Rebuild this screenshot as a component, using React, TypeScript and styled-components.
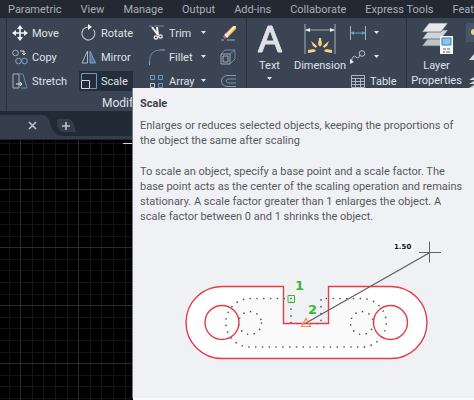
import React from 'react';
import styled, { createGlobalStyle } from 'styled-components';

const GlobalStyle = createGlobalStyle`
  * { box-sizing: border-box; }
  body { margin: 0; background: #000; overflow: hidden; }
  body, button { font-family: Roboto, "Open Sans", sans-serif; }
  button { appearance: none; border: 0; padding: 0; margin: 0; background: none; color: inherit; }
  svg { display: block; flex: none; overflow: visible; }
`;

const Workspace = styled.div`
  position: relative;
  display: flex;
  flex-direction: column;
  min-height: 100vh;
  overflow: hidden;
`;

const TabBar = styled.nav`
  display: flex;
  gap: 19px;
  height: 18px;
  padding-left: 8px;
  background: #222933;
  overflow: hidden;
`;

const RibbonTab = styled.button`
  flex: none;
  font-size: 11px;
  line-height: 19px;
  color: #a9afb8;
  white-space: nowrap;
`;

const Ribbon = styled.div`
  display: flex;
  height: 93px;
  padding-left: 6px;
  background: #3b4453;
  color: #dfe3e9;
  overflow: hidden;
`;

const Panel = styled.section<{ $width: number }>`
  flex: none;
  width: ${p => p.$width}px;
  border-left: 1px solid #29313d;
`;

const ToolGrid = styled.div`
  display: grid;
  grid-template-columns: 69px 68px 71px 24px;
  grid-auto-rows: 24px;
  padding: 3px 0 0 3px;
`;

const Tool = styled.button<{ $active?: boolean; $menu?: boolean }>`
  display: flex;
  align-items: center;
  gap: 4px;
  width: ${p => (p.$active ? '54px' : p.$menu ? '60px' : 'auto')};
  height: ${p => (p.$active ? '20px' : '24px')};
  align-self: center;
  padding-left: 2px;
  background: ${p => (p.$active ? '#242d3a' : 'transparent')};
  font-size: 11px;
  white-space: nowrap;
`;

const ToolLabel = styled.span`
  flex: 1;
  text-align: left;
`;

const PanelTitle = styled.div`
  padding-left: 95px;
  font-size: 12px;
  line-height: 20px;
`;

const AnnotationPanel = styled(Panel)`
  display: flex;
`;

const BigTool = styled.button<{ $width: number }>`
  display: flex;
  flex-direction: column;
  align-items: center;
  flex: none;
  width: ${p => p.$width}px;
  height: 70px;
  padding-top: 5px;
  font-size: 11px;
  line-height: 15px;
`;

const AnnotationTools = styled.div`
  display: flex;
  gap: 2px;
  width: 101px;
`;

const BigLabel = styled.span`
  display: block;
  padding-top: 1px;
`;

const SmallTools = styled.div`
  display: grid;
  grid-auto-rows: 24px;
  padding-top: 3px;
`;

const LayerPanel = styled(Panel)`
  display: flex;
`;

const LayerTools = styled.div`
  display: flex;
  flex-direction: column;
  gap: 6px;
  padding-top: 5px;
`;

const LayerButton = styled.button<{ $active?: boolean }>`
  display: flex;
  align-items: center;
  width: 40px;
  height: 19px;
  padding-left: 3px;
  background: ${p => (p.$active ? '#46546c' : 'transparent')};
`;

const FileTabs = styled.div`
  display: flex;
  height: 28px;
  background: #222a36;
`;

const FileTab = styled.div`
  display: flex;
  position: relative;
`;

const TabShape = styled.svg`
  width: 133px;
  height: 28px;
`;

const CloseButton = styled.button`
  position: absolute;
  left: 27px;
  top: 9px;
  width: 11px;
  height: 11px;
`;

const NewTab = styled.button`
  position: absolute;
  left: 57px;
  top: 7px;
  width: 20px;
  height: 16px;
`;

const Drawing = styled.svg`
  flex: 1 0 auto;
  width: 100%;
  height: 261px;
  background: #000;
`;

const Tooltip = styled.aside`
  position: absolute;
  left: 133px;
  top: 88px;
  right: 0;
  bottom: 2px;
  padding: 8px 2px 0 7px;
  background: #f0f1f5;
  color: #58595d;
  box-shadow: 0 2px 0 #fafbfd, -1px 0 0 #777a7e;
`;

const TipTitle = styled.h1`
  margin: 0 0 7px;
  font-size: 11px;
  line-height: 15px;
  font-weight: 700;
  color: #414246;
`;

const TipText = styled.p`
  margin: 0 0 16px;
  font-size: 11px;
  line-height: 15px;
  white-space: nowrap;
`;

const Diagram = styled.svg`
  position: absolute;
  left: 47px;
  top: 147px;
`;

const Arrow = () => (
  <svg width="6" height="4" viewBox="0 0 6 4"><path d="M0 0h5L2.500 3z" fill="#e4e7ec" /></svg>
);

const paths: Record<string, React.ReactNode> = {
  move: <g fill="#f1f3f5" stroke="#f1f3f5"><path d="M8 3v10M3 8h10" strokeWidth="1.600" /><path stroke="none" d="M8 0l3 4H5zM8 16l-3-4h6zM0 8l4-3v6zM16 8l-4 3V5z" /></g>,
  copy: <g fill="none" stroke="#a9b4c1"><circle cx="3.500" cy="4" r="2.800" /><path d="M8 2h4v4M10 4l2 2 2-2" stroke="#e4e7ec" /><circle cx="6.500" cy="12" r="2.800" stroke="#7ba7c9" /><circle cx="12.500" cy="12" r="2.800" stroke="#7ba7c9" /></g>,
  stretch: <g fill="none"><path d="M1 1h6v14H1z" stroke="#aab2bd" /><path d="M7 1h4l4 14H9" stroke="#638caf" /><path d="M4 11h6M8 9l2 2-2 2" stroke="#e7eaf0" /></g>,
  rotate: <g fill="none" stroke="#b5bfca" strokeWidth="1.200"><path d="M12.500 4.500A6.500 6.500 0 1 1 7 2" /><path d="M7 -1l4 3-4 3z" fill="#f0f2f5" stroke="none" /></g>,
  mirror: <g><path d="M6.500 2v12H1z" fill="none" stroke="#aab5c1" /><path d="M9 2v12h5.500z" fill="#51799b" stroke="#79a3c5" /></g>,
  scale: <g fill="none"><path d="M.5 7V.5h15v15H9" stroke="#6f9bbb" /><path d="M.5 7.500h8v8h-8z" stroke="#d3d9e0" /></g>,
  trim: <g fill="none" stroke="#f0f1f4"><path d="M0 1h3M5 1h10" stroke="#7c8898" /><path d="M3 2l6 8M8 2l1 8" strokeWidth="2" /><circle cx="7" cy="12.500" r="1.700" strokeWidth="1.300" /><circle cx="11.500" cy="11.500" r="1.700" strokeWidth="1.300" /></g>,
  fillet: <g fill="none"><path d="M.5 16v-4M11 1h5" stroke="#98a4b2" /><path d="M.5 12Q1 1 11 1" stroke="#638eaf" /></g>,
  array: <g fill="none" stroke="#6e9dbf"><path d="M1.500 2.500h4v4h-4zM9.500 2.500h4v4h-4zM9.500 10.500h4v4h-4z" /><path d="M1.500 10.500h4v4h-4z" stroke="#c8ced5" /></g>,
  erase: <g><path d="M1 15h3M7 15h8" stroke="#a5abb4" /><path d="M13 1h3v3l-7 7-3-3z" fill="#f4bd5d" /><path d="M14 1l2 .5L8 10l-1-1z" fill="#fff0cc" /><path d="M6 8l3 3-2 2-3-3z" fill="#f5f5f5" /><path d="M4 10l3 3-2 1-2-2z" fill="#d9576a" /></g>,
  explode: <g fill="none"><path d="M1 5h9v10H1zM3 7h5v6H3z" stroke="#9da9b5" /><path d="M1 5l4-4h10v9l-5 5M10 5l5-4" stroke="#638eae" /></g>,
  offset: <g fill="none"><path d="M16 2.500H7a5 5 0 0 0 0 11h9" stroke="#899dad" /><path d="M16 6H8q-4 2 0 4h8" stroke="#679abc" /></g>,
};

const Icon = ({ name }: { name: string }) => <svg width="16" height="16" viewBox="0 0 16 16">{paths[name]}</svg>;

const tools: { icon: string; label?: string; menu?: boolean }[] = [
  { icon: 'move', label: 'Move' }, { icon: 'rotate', label: 'Rotate' }, { icon: 'trim', label: 'Trim', menu: true }, { icon: 'erase' },
  { icon: 'copy', label: 'Copy' }, { icon: 'mirror', label: 'Mirror' }, { icon: 'fillet', label: 'Fillet', menu: true }, { icon: 'explode' },
  { icon: 'stretch', label: 'Stretch' }, { icon: 'scale', label: 'Scale' }, { icon: 'array', label: 'Array', menu: true }, { icon: 'offset' },
];

const tabs = ['Parametric', 'View', 'Manage', 'Output', 'Add-ins', 'Collaborate', 'Express Tools', 'Featured Apps'];

const DimensionIcon = () => (
  <svg width="32" height="34" viewBox="0 0 32 34">
    <path d="M1 1v30M31 1v30M2 7h28" stroke="#a5b0bc" fill="none" />
    <path d="M1 7l5-2v4zM31 7l-5-2v4z" fill="#e6eaf0" />
    <g fill="#f4d187"><path d="M15 15h2l1 6-2 3-2-3zM7 18l6 5-1 2-3-2zM25 18l-6 5 1 2 3-2zM4 27l6-1 2 2-2 1-6 1zM28 27l-6-1-2 2 2 1 6 1z" /></g>
  </svg>
);

const LayersIcon = () => (
  <svg width="32" height="34" viewBox="0 0 32 34">
    <g stroke="#4f5968" strokeWidth=".7"><path d="M8 14h19l-7 9H1z" fill="#bfc3c8" /><path d="M8 7h19l-7 9H1z" fill="#d1d4d7" /><path d="M8 0h19l-7 9H1z" fill="#e7e8e9" /></g>
    <path d="M19 13h13v18H19z" fill="#f7f8fa" />
    <path d="M21 15h9v7h-9z" fill="#8bc6e9" stroke="#3185b7" />
    <path d="M22 26h3m1 0h3M22 29h2m1 0h4" stroke="#57616d" />
  </svg>
);

const GridDrawing = () => (
  <Drawing role="img" aria-label="Drawing area">
    <defs>
      <pattern id="grid" x="20" y="50" width="58" height="58" patternUnits="userSpaceOnUse">
        <path d="M12.500 0v58M23.500 0v58M35.500 0v58M47.500 0v58M0 12.500h58M0 23.500h58M0 35.500h58M0 47.500h58" stroke="#131515" />
        <path d="M.5 0v58M0 .5h58" stroke="#292b2b" />
      </pattern>
    </defs>
    <rect width="100%" height="100%" fill="url(#grid)" />
    <path d="M123 4.500h10" stroke="#d6d6d6" />
    <path d="M0 .5h133" stroke="#202733" />
  </Drawing>
);

const ScaleDiagram = () => (
  <Diagram width="270" height="140" viewBox="180 235 270 140" role="img" aria-label="Scaling from base point 1 to point 2 by 1.50">
    <path d="M222 286.500H283.500V323.500H328.500V286.500H391A36 36 0 0 1 391 358.500H222A36 36 0 0 1 222 286.500Z" fill="#fff" />
    <path d="M250 298.500h33.500v25h45v-25H362a24 24 0 0 1 0 48.500H250a24 24 0 0 1 0-48.500z" fill="#fafafb" />
    <circle cx="222" cy="322.500" r="17" fill="#fdfdfe" /><circle cx="390.500" cy="322.500" r="17" fill="#fdfdfe" />
    <g fill="none" stroke="#555" strokeWidth="1.700" strokeLinecap="round" strokeDasharray="0 6.800">
      <path d="M291 298.500H250a24 24 0 0 0 0 48.500H362a24 24 0 0 0 0-48.500H321V323.500H291Z" />
      <circle cx="250" cy="323" r="11.500" /><circle cx="362" cy="323" r="11.500" />
    </g>
    <g fill="none" stroke="#e43d47" strokeWidth="1.400">
      <path d="M222 286.500H283.500V323.500H328.500V286.500H391A36 36 0 0 1 391 358.500H222A36 36 0 0 1 222 286.500Z" />
      <circle cx="222" cy="322.500" r="17" /><circle cx="390.500" cy="322.500" r="17" />
    </g>
    <path d="M306 323L430 252.500" stroke="#626265" strokeWidth="1.400" />
    <path d="M419 252.500h22M429.500 241.500v21" stroke="#626265" />
    <path d="M301.500 326.500l4.500-8 4.500 8z" fill="none" stroke="#f28d4c" strokeWidth="1.200" />
    <path d="M288 295.500h6.500v7H288z" fill="none" stroke="#35ba2c" />
    <path d="M394 241h20v10h-20z" fill="#f7f8fa" />
    <g fontFamily="DejaVu Sans, sans-serif" fontWeight="700">
      <text x="295" y="290" fontSize="13" fill="#35ba2c">1</text>
      <text x="308" y="314" fontSize="13" fill="#35ba2c">2</text>
      <text x="394" y="249" fontSize="7" fill="#151515">1.50</text>
    </g>
  </Diagram>
);

export default function App() {
  return (
    <Workspace>
      <GlobalStyle />
      <TabBar>{tabs.map(t => <RibbonTab key={t}>{t}</RibbonTab>)}</TabBar>
      <Ribbon>
        <Panel $width={240}>
          <ToolGrid>
            {tools.map(t => (
              <Tool key={t.icon} $active={t.icon === 'scale'} $menu={t.menu} aria-label={t.label ?? t.icon}>
                <Icon name={t.icon} />
                {t.label && <ToolLabel>{t.label}</ToolLabel>}
                {t.menu && <Arrow />}
              </Tool>
            ))}
          </ToolGrid>
          <PanelTitle>Modify</PanelTitle>
        </Panel>
        <AnnotationPanel $width={160}>
          <AnnotationTools>
            <BigTool $width={45}>
              <svg width="26" height="34" viewBox="0 0 26 34"><path fillRule="evenodd" d="M1 29L11 3h4l10 26h-4l-3-8H8l-3 8zM9 18h8L13 7z" fill="#dde1e5" stroke="#dde1e5" /></svg>
              <BigLabel>Text</BigLabel>
              <svg width="5" height="8" viewBox="0 0 5 8"><path d="M0 4h5L2.500 7z" fill="#e4e7ec" /></svg>
            </BigTool>
            <BigTool $width={52}>
              <DimensionIcon />
              <BigLabel>Dimension</BigLabel>
            </BigTool>
          </AnnotationTools>
          <SmallTools>
            <Tool aria-label="Linear">
              <svg width="16" height="14" viewBox="0 0 16 14"><path d="M.5 0v14M15.500 0v14" stroke="#a6b1bd" /><path d="M1 7h14" stroke="#5caacb" /><path d="M1 7l3-2v4zM15 7l-3-2v4z" fill="#5caacb" /></svg>
              <svg width="12" height="4" viewBox="0 0 12 4"><path d="M4 0h5L6.500 3z" fill="#e4e7ec" /></svg>
            </Tool>
            <Tool aria-label="Leader">
              <svg width="16" height="14" viewBox="0 0 16 14"><path d="M1 12Q3 4 6 7t4-3" fill="none" stroke="#bbc4cd" /><circle cx="12" cy="3.500" r="2.800" fill="none" stroke="#bbc4cd" /><path d="M0 9v5l4-2z" fill="#e7eaf0" /></svg>
              <svg width="12" height="4" viewBox="0 0 12 4"><path d="M4 0h5L6.500 3z" fill="#e4e7ec" /></svg>
            </Tool>
            <Tool>
              <svg width="16" height="13" viewBox="0 0 16 13"><path d="M1.500.5h13v12h-13zM1 3.500h14M1 6.500h14M1 9.500h14M5.500 3v9M10.500 3v9" fill="none" stroke="#aeb6c0" /></svg>
              <ToolLabel>Table</ToolLabel>
            </Tool>
          </SmallTools>
        </AnnotationPanel>
        <LayerPanel $width={120}>
          <BigTool $width={59}>
            <LayersIcon />
            <BigLabel>Layer<br />Properties</BigLabel>
          </BigTool>
          <LayerTools>
            <LayerButton $active aria-label="Layer on"><svg width="9" height="10" viewBox="0 0 9 10"><circle cx="5" cy="4" r="3" fill="#f4d187" /></svg></LayerButton>
            <LayerButton aria-label="Layer off"><svg width="16" height="16" viewBox="0 0 16 16"><path d="M5 4h11l-5 6H0z" fill="#d7dadd" /></svg></LayerButton>
            <LayerButton aria-label="Match layer"><svg width="16" height="14" viewBox="0 0 16 14"><path d="M5 1h11l-3 3H0zM5 5h11l-3 3H0zM5 9h11l-3 3H0z" fill="#d7dadd" /></svg></LayerButton>
          </LayerTools>
        </LayerPanel>
      </Ribbon>
      <FileTabs>
        <FileTab>
          <TabShape viewBox="0 0 133 28"><path d="M0 4h41q7 0 9 8 3 13 14 13h69v3H0z" fill="#343d4b" /><path d="M57 8h11q4 0 6 6l2 7H64q-5 0-7-6z" fill="#353d49" /></TabShape>
          <CloseButton aria-label="Close drawing"><svg width="11" height="11" viewBox="0 0 11 11"><path d="M2 2l7 7M9 2L2 9" stroke="#bec3ca" strokeWidth="1.600" /></svg></CloseButton>
          <NewTab aria-label="New drawing"><svg width="20" height="16" viewBox="0 0 20 16"><path d="M5 8h8M9 4v8" stroke="#bec3ca" strokeWidth="1.600" /></svg></NewTab>
        </FileTab>
      </FileTabs>
      <GridDrawing />
      <Tooltip role="tooltip">
        <TipTitle>Scale</TipTitle>
        <TipText>Enlarges or reduces selected objects, keeping the proportions of<br />the object the same after scaling</TipText>
        <TipText>To scale an object, specify a base point and a scale factor. The<br />base point acts as the center of the scaling operation and remains<br />stationary. A scale factor greater than 1 enlarges the object. A<br />scale factor between 0 and 1 shrinks the object.</TipText>
        <ScaleDiagram />
      </Tooltip>
    </Workspace>
  );
}
